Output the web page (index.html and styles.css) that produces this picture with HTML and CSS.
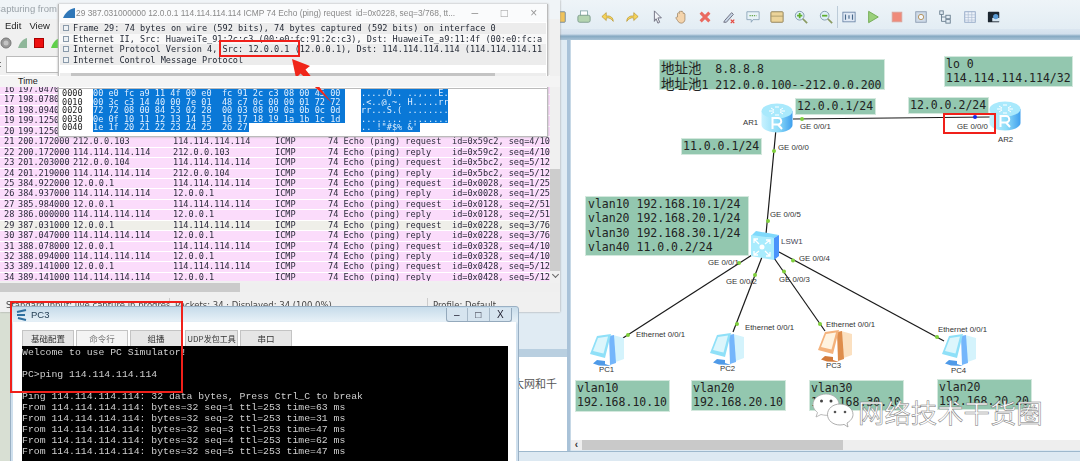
FILE: index.html
```html
<!DOCTYPE html>
<html lang="en">
<head>
<meta charset="utf-8">
<title>Wireshark and eNSP capture</title>
<link rel="stylesheet" href="styles.css">
</head>
<body>
<svg class="defs" width="0" height="0" aria-hidden="true">
  <defs>
    <linearGradient id="rb" x1="0" y1="0" x2="1" y2="0"><stop offset="0" stop-color="#c8f2ff"/><stop offset=".55" stop-color="#8ddcf8"/><stop offset="1" stop-color="#3f9fee"/></linearGradient>
    <symbol id="router" viewBox="0 0 32 30">
      <path d="M.5 8v14c0 4 7 7.500 15.500 7.500S31.500 26 31.500 22V8z" fill="url(#rb)"/>
      <ellipse cx="16" cy="8" rx="15.500" ry="7.500" fill="#a9e9fc"/>
      <path d="M8 8h5M19 8h5M14 4h4M14 12h4M10 5l3 2M22 5l-3 2M10 11l3-2M22 11l-3-2" stroke="#fff" stroke-width="1" fill="none"/>
      <path d="M11.500 26v-11h5.500a3 3 0 0 1 0 6.500h-5.500m5.500 0l4 4.500" stroke="#fff" stroke-width="2" fill="none"/>
    </symbol>
    <symbol id="switch" viewBox="0 0 30 30">
      <path d="M1 6 6 1l23 4-5 3z" fill="#7fd9fb"/>
      <path d="M1 5l23 3v22L1 26z" fill="#a9ecfd"/>
      <path d="M24 8l5-3v21l-5 4z" fill="#4a93fb"/>
      <circle cx="12" cy="17" r="2.500" fill="#fff"/>
      <path d="M4 9l5 5M4 13V9h4M20 10l-5 4M20 14v-4h-4M4 25l5-4M4 21v4h4M20 26l-5-5M20 22v4h-4" stroke="#fff" stroke-width="1.300" fill="none"/>
    </symbol>
    <symbol id="pcb" viewBox="0 0 36 36">
      <path d="M24 3l11 3v21l-11 4z" fill="#d4f3fc"/>
      <path d="M20 4l5-1 2 28-6 2z" fill="#74b6fb"/>
      <path d="M8 4 22 2 16 26 1 22z" fill="#8fe0f8"/>
      <path d="M9 6l10-1.500-4.500 17-10.500-2.500z" fill="#dcf6fc"/>
      <path d="M8 28l8 1v3l6 2-12-.5-6-2z" fill="#4f9ae8"/>
    </symbol>
    <symbol id="pco" viewBox="0 0 36 36">
      <path d="M24 3l11 3v21l-11 4z" fill="#fbe0c0"/>
      <path d="M20 4l5-1 2 28-6 2z" fill="#de8d4c"/>
      <path d="M8 4 22 2 16 26 1 22z" fill="#f4b27c"/>
      <path d="M9 6l10-1.500-4.500 17-10.500-2.500z" fill="#fff3e0"/>
      <path d="M8 28l8 1v3l6 2-12-.5-6-2z" fill="#d37a3a"/>
    </symbol>
  </defs>
</svg>

<div class="stage">
  <!-- simulator window behind -->
  <section class="sim">
    <div class="sim-bar">
      <svg class="tool" viewBox="0 0 16 16"><rect x="1" y="2" width="13" height="12" rx="1" fill="#f1c35a" stroke="#6d87a0"/></svg>
      <svg class="tool" viewBox="0 0 16 16"><rect x="4" y="1" width="8" height="6" fill="#fff" stroke="#8aa"/><rect x="1" y="6" width="14" height="8" rx="2" fill="#b4d4b0" stroke="#7a9a8a"/></svg>
      <svg class="tool" viewBox="0 0 16 16"><path d="M14 13c0-4-3-7-8-6V3L1 7.500 6 12V9c3-.5 6 1 8 4z" fill="#f5d35c" stroke="#b08a20" stroke-width=".7"/></svg>
      <svg class="tool" viewBox="0 0 16 16"><path d="M2 13c0-4 3-7 8-6V3l5 4.500L10 12V9C7 8.500 4 10 2 13z" fill="#f5d35c" stroke="#b08a20" stroke-width=".7"/></svg>
      <svg class="tool" viewBox="0 0 16 16"><path d="M5 1l8 8H9l2 5-2 1-2-5-2 3z" fill="#f2f4f8" stroke="#667"/></svg>
      <svg class="tool" viewBox="0 0 16 16"><path d="M4 8V4l1-1 1 1V2l1-1 1 1v-.5h1.500L10.500 3v1l1-.5 1 1V11c0 2-2 4-4 4S5 14 4 12L2 9l1-1z" fill="#f4d4ac" stroke="#8a7050" stroke-width=".7"/></svg>
      <svg class="tool" viewBox="0 0 16 16"><path d="M3 3l10 10M13 3L3 13" stroke="#ea6a60" stroke-width="3.500"/></svg>
      <svg class="tool" viewBox="0 0 16 16"><path d="M3 12l8-9 2 2-8 9H2z" fill="#c8d6e6" stroke="#667"/><path d="M10 11l4 4M14 11l-4 4" stroke="#e5473d" stroke-width="1.500"/></svg>
      <svg class="tool" viewBox="0 0 16 16"><path d="M1 2h14v9H8l-2 3v-3H1z" fill="#e8f2f8" stroke="#8aa4b8"/><path d="M4 6.500h8" stroke="#6aa84f" stroke-dasharray="1.500 1" stroke-width="1.500"/></svg>
      <svg class="tool" viewBox="0 0 16 16"><rect x="1" y="2" width="14" height="12" rx="1" fill="#ecd49a" stroke="#8a7a50"/><path d="M1 7h14" stroke="#a89868"/></svg>
      <svg class="tool" viewBox="0 0 16 16"><circle cx="6.500" cy="6.500" r="5" fill="#dff0f8" stroke="#7a94a8"/><path d="M10 10l5 5" stroke="#8a9a60" stroke-width="2"/><path d="M6.500 3.500v6M3.500 6.500h6" stroke="#5eae2e" stroke-width="2"/></svg>
      <svg class="tool" viewBox="0 0 16 16"><circle cx="6.500" cy="6.500" r="5" fill="#dff0f8" stroke="#7a94a8"/><path d="M10 10l5 5" stroke="#8a9a60" stroke-width="2"/><path d="M3.500 6.500h6" stroke="#5eae2e" stroke-width="2"/></svg>
      <i class="tool-sep"></i>
      <svg class="tool" viewBox="0 0 16 16"><rect x="1" y="2.500" width="14" height="11" fill="#dfe8f4" stroke="#6d87a8"/><path d="M4 5v6M8 6v4M12 5v6" stroke="#47688a" stroke-width="1.300"/></svg>
      <svg class="tool" viewBox="0 0 16 16"><path d="M3 1.500l11 6.500-11 6.500z" fill="#9ad07c" stroke="#6ea84e"/></svg>
      <svg class="tool" viewBox="0 0 16 16"><rect x="2.500" y="2.500" width="11" height="11" fill="#ef8a7a" stroke="#d9a39a"/></svg>
      <svg class="tool" viewBox="0 0 16 16"><rect x="2" y="2" width="12" height="12" fill="#cfdbe8" stroke="#8a9ab0"/><circle cx="8" cy="8" r="3" fill="#f4f8fc" stroke="#b08a50"/></svg>
      <svg class="tool" viewBox="0 0 16 16"><path d="M4 3v10h5M4 8h5" stroke="#667a8c" fill="none"/><rect x="2" y="1" width="4" height="4" fill="#e4eef6" stroke="#667a8c"/><rect x="9" y="6" width="5" height="4" fill="#e4eef6" stroke="#667a8c"/><rect x="9" y="11" width="5" height="4" fill="#e4eef6" stroke="#667a8c"/></svg>
      <svg class="tool" viewBox="0 0 16 16"><rect x="2" y="2" width="12" height="12" fill="#eef3fa" stroke="#8ea4c4"/><path d="M2 5.500h12M2 8.500h12M2 11.500h12M6 2v12M10 2v12" stroke="#a4b6d0" stroke-width=".7"/></svg>
      <svg class="tool" viewBox="0 0 16 16"><rect x="1" y="2" width="13" height="12" rx="1" fill="#1c2630"/><path d="M6 9h9v4H6z" fill="#d8e6f0"/><circle cx="10" cy="7.500" r="3" fill="#5b9bd5"/></svg>
    </div>
    <div class="sim-strip"></div>
    <div class="sim-main">
      <aside class="sim-side">
        <div class="side-top"></div>
        <div class="side-band"></div>
        <div class="side-panel"><p class="side-text">太网和千</p></div>
      </aside>
      <div class="sim-right">
        <div class="canvas">
          <svg class="links" viewBox="571 41 509 400" width="509" height="400">
            <g stroke="#1a1a1a" stroke-width="1.200" fill="none">
              <path d="M793 120 990 118"/><path d="M776 130 766 235"/><path d="M752 256 623 339"/>
              <path d="M762 258 733 333"/><path d="M774 259 825 332"/><path d="M779 253 944 342"/>
            </g>
            <g fill="#7fcf3c">
              <circle cx="802" cy="120" r="2"/><circle cx="774" cy="152" r="2"/><circle cx="768" cy="222" r="2"/>
              <circle cx="739" cy="264" r="2"/><circle cx="755" cy="276" r="2"/><circle cx="784" cy="272.500" r="2"/>
              <circle cx="793" cy="261.500" r="2"/><circle cx="628" cy="336" r="2"/><circle cx="737" cy="325" r="2"/>
              <circle cx="820" cy="325" r="2"/><circle cx="937" cy="338" r="2"/>
            </g>
            <circle cx="975" cy="118" r="2" fill="#1428e8"/>
          </svg>

          <div class="note n1"><span class="cjk">地址池</span>  8.8.8.8<br><span class="cjk">地址池</span>1 212.0.0.100--212.0.0.200</div>
          <div class="note n2">lo 0<br>114.114.114.114/32</div>
          <div class="note n3">12.0.0.1/24</div>
          <div class="note n4">12.0.0.2/24</div>
          <div class="note n5">11.0.0.1/24</div>
          <div class="note n6">vlan10 192.168.10.1/24<br>vlan20 192.168.20.1/24<br>vlan30 192.168.30.1/24<br>vlan40 11.0.0.2/24</div>
          <div class="note n7">vlan10<br>192.168.10.10</div>
          <div class="note n8">vlan20<br>192.168.20.10</div>
          <div class="note n9">vlan30<br>192.168.30.10</div>
          <div class="note n10">vlan20<br>192.168.20.20</div>

          <svg class="dev d-ar1"><use href="#router"/></svg>
          <svg class="dev d-ar2"><use href="#router"/></svg>
          <svg class="dev d-sw"><use href="#switch"/></svg>
          <svg class="dev d-pc1"><use href="#pcb"/></svg>
          <svg class="dev d-pc2"><use href="#pcb"/></svg>
          <svg class="dev d-pc3"><use href="#pco"/></svg>
          <svg class="dev d-pc4"><use href="#pcb"/></svg>

          <span class="tag t1">AR1</span><span class="tag t2">AR2</span><span class="tag t3">LSW1</span>
          <span class="tag t4">PC1</span><span class="tag t5">PC2</span><span class="tag t6">PC3</span><span class="tag t7">PC4</span>
          <span class="tag t8">GE 0/0/1</span><span class="tag t9">GE 0/0/0</span><span class="tag t10">GE 0/0/0</span>
          <span class="tag t11">GE 0/0/5</span><span class="tag t12">GE 0/0/1</span><span class="tag t13">GE 0/0/2</span>
          <span class="tag t14">GE 0/0/3</span><span class="tag t15">GE 0/0/4</span>
          <span class="tag t16">Ethernet 0/0/1</span><span class="tag t17">Ethernet 0/0/1</span>
          <span class="tag t18">Ethernet 0/0/1</span><span class="tag t19">Ethernet 0/0/1</span>

          <svg class="wechat" viewBox="0 0 42 36">
            <path d="M14 1C7 1 1 5.500 1 11.500c0 3.500 2 6 4.500 8L4 24l5-2.500c2 .5 3.500.8 5 .8 7 0 13-5 13-10.800S21 1 14 1z" fill="#fff" stroke="#aaa" stroke-width=".8"/>
            <path d="M28 11c-7 0-12.500 4.500-12.500 10.500S21 32 28 32c1.500 0 3-.3 4-.6l4 2.600-1-4c3.500-2 6-5 6-8.500C41 15.500 35 11 28 11z" fill="#fff" stroke="#999" stroke-width=".8"/>
            <circle cx="9.500" cy="8" r="1.500" fill="#444"/><circle cx="19" cy="8" r="1.500" fill="#444"/>
            <circle cx="23" cy="19" r="1.300" fill="#555"/><circle cx="33" cy="19" r="1.300" fill="#555"/>
          </svg>
          <span class="mark">网络技术干货圈</span>
        </div>
        <div class="sim-scroll"><b class="sim-left">‹</b><i class="sim-thumb"></i></div>
      </div>
    </div>
    <div class="sim-foot"></div>
  </section>

  <!-- wireshark main window -->
  <section class="ws">
    <div class="ws-title">Capturing from Standard input</div>
    <div class="ws-menu"><span>Edit</span><span>View</span><span>Go</span></div>
    <div class="ws-tools">
      <svg class="ws-ic" viewBox="0 0 12 12"><circle cx="6" cy="6" r="5" fill="#999" stroke="#777"/><circle cx="6" cy="6" r="2.500" fill="#c4c4c4"/></svg>
      <svg class="ws-ic" viewBox="0 0 12 12"><path d="M1 11C3 5 6 2 10 1v10z" fill="#8fb79a"/></svg>
      <svg class="ws-ic" viewBox="0 0 12 12"><rect x="1.500" y="1.500" width="9" height="9" fill="#e11" stroke="#a00"/></svg>
      <svg class="ws-ic" viewBox="0 0 12 12"><path d="M1 11C3 5 6 2 10 1v10z" fill="#5fd04a"/></svg>
    </div>
    <div class="ws-filter"><span>r:</span><i class="ws-input"></i></div>
    <div class="ws-body">
      <div class="ws-head"><span class="h-time">Time</span></div>
      <div class="ws-list">
        <div class="pkt"><span>16</span><span>197.047000</span></div>
        <div class="pkt"><span>17</span><span>198.078000</span></div>
        <div class="pkt"><span>18</span><span>198.094000</span></div>
        <div class="pkt"><span>19</span><span>199.125000</span></div>
        <div class="pkt"><span>20</span><span>199.125000</span></div>
        <div class="pkt"><span>21</span><span>200.172000</span><span>212.0.0.103</span><span>114.114.114.114</span><span>ICMP</span><span>74 Echo (ping) request</span><span>id=0x59c2, seq=4/10</span></div>
        <div class="pkt"><span>22</span><span>200.172000</span><span>114.114.114.114</span><span>212.0.0.103</span><span>ICMP</span><span>74 Echo (ping) reply</span><span>id=0x59c2, seq=4/10</span></div>
        <div class="pkt"><span>23</span><span>201.203000</span><span>212.0.0.104</span><span>114.114.114.114</span><span>ICMP</span><span>74 Echo (ping) request</span><span>id=0x5bc2, seq=5/12</span></div>
        <div class="pkt"><span>24</span><span>201.219000</span><span>114.114.114.114</span><span>212.0.0.104</span><span>ICMP</span><span>74 Echo (ping) reply</span><span>id=0x5bc2, seq=5/12</span></div>
        <div class="pkt"><span>25</span><span>384.922000</span><span>12.0.0.1</span><span>114.114.114.114</span><span>ICMP</span><span>74 Echo (ping) request</span><span>id=0x0028, seq=1/25</span></div>
        <div class="pkt"><span>26</span><span>384.937000</span><span>114.114.114.114</span><span>12.0.0.1</span><span>ICMP</span><span>74 Echo (ping) reply</span><span>id=0x0028, seq=1/25</span></div>
        <div class="pkt"><span>27</span><span>385.984000</span><span>12.0.0.1</span><span>114.114.114.114</span><span>ICMP</span><span>74 Echo (ping) request</span><span>id=0x0128, seq=2/51</span></div>
        <div class="pkt"><span>28</span><span>386.000000</span><span>114.114.114.114</span><span>12.0.0.1</span><span>ICMP</span><span>74 Echo (ping) reply</span><span>id=0x0128, seq=2/51</span></div>
        <div class="pkt sel"><span>29</span><span>387.031000</span><span>12.0.0.1</span><span>114.114.114.114</span><span>ICMP</span><span>74 Echo (ping) request</span><span>id=0x0228, seq=3/76</span></div>
        <div class="pkt"><span>30</span><span>387.047000</span><span>114.114.114.114</span><span>12.0.0.1</span><span>ICMP</span><span>74 Echo (ping) reply</span><span>id=0x0228, seq=3/76</span></div>
        <div class="pkt"><span>31</span><span>388.078000</span><span>12.0.0.1</span><span>114.114.114.114</span><span>ICMP</span><span>74 Echo (ping) request</span><span>id=0x0328, seq=4/10</span></div>
        <div class="pkt"><span>32</span><span>388.094000</span><span>114.114.114.114</span><span>12.0.0.1</span><span>ICMP</span><span>74 Echo (ping) reply</span><span>id=0x0328, seq=4/10</span></div>
        <div class="pkt"><span>33</span><span>389.141000</span><span>12.0.0.1</span><span>114.114.114.114</span><span>ICMP</span><span>74 Echo (ping) request</span><span>id=0x0428, seq=5/12</span></div>
        <div class="pkt"><span>34</span><span>389.141000</span><span>114.114.114.114</span><span>12.0.0.1</span><span>ICMP</span><span>74 Echo (ping) reply</span><span>id=0x0428, seq=5/12</span></div>
      </div>
      <div class="ws-vbar"><b class="v-up"></b><i class="ws-vthumb"></i><b class="v-down"></b></div>
    </div>
    <div class="ws-hbar"><i class="ws-hthumb"></i></div>
    <div class="ws-status"><span class="st1">Standard input: live capture in progress</span><span class="st2">Packets: 34 · Displayed: 34 (100.0%)</span><span class="st3">Profile: Default</span></div>
  </section>

  <!-- packet detail window -->
  <section class="detail">
    <header class="d-title">
      <svg class="fin" viewBox="0 0 14 12"><path d="M1 11C3 6 7 2 13 1v10z" fill="#2f77b8"/></svg>
      <span class="d-cap">29 387.031000000 12.0.0.1 114.114.114.114 ICMP 74 Echo (ping) request  id=0x0228, seq=3/768, tt...</span>
      <span class="d-btn">–</span><span class="d-btn">□</span><span class="d-btn">×</span>
    </header>
    <div class="tree">
      <div class="tr"><i class="plus"></i>Frame 29: 74 bytes on wire (592 bits), 74 bytes captured (592 bits) on interface 0</div>
      <div class="tr alt"><i class="plus"></i>Ethernet II, Src: HuaweiTe_91:2c:c3 (00:e0:fc:91:2c:c3), Dst: HuaweiTe_a9:11:4f (00:e0:fc:a</div>
      <div class="tr"><i class="plus"></i>Internet Protocol Version 4, Src: 12.0.0.1 (12.0.0.1), Dst: 114.114.114.114 (114.114.114.11</div>
      <div class="tr"><i class="plus"></i>Internet Control Message Protocol</div>
    </div>
    <div class="d-hbar"><b>‹</b><i class="d-thumb"></i><b>›</b></div>
    <div class="hex">
      <div class="hx"><span class="off">0000</span><span class="hb">00 e0 fc a9 11 4f 00 e0  fc 91 2c c3 08 00 45 00</span><span class="ha">.....O.. ..,...E.</span></div>
      <div class="hx"><span class="off">0010</span><span class="hb">00 3c c3 14 40 00 7e 01  48 c7 0c 00 00 01 72 72</span><span class="ha">.&lt;..@.~. H.....rr</span></div>
      <div class="hx"><span class="off">0020</span><span class="hb">72 72 08 00 84 53 02 28  00 03 08 09 0a 0b 0c 0d</span><span class="ha">rr...S.( ........</span></div>
      <div class="hx"><span class="off">0030</span><span class="hb">0e 0f 10 11 12 13 14 15  16 17 18 19 1a 1b 1c 1d</span><span class="ha">........ ........</span></div>
      <div class="hx"><span class="off">0040</span><span class="hb short">1e 1f 20 21 22 23 24 25  26 27</span><span class="ha short2">.. !"#$% &amp;'</span></div>
    </div>
  </section>

  <!-- PC3 console -->
  <section class="pc">
    <header class="pc-title">
      <svg class="pc-ic" viewBox="0 0 12 12"><path d="M1 3l9-2M1 6h8M2 9l8 2" stroke="#2f6f9f" stroke-width="2"/></svg>
      <span>PC3</span>
      <div class="pc-btns"><span>–</span><span>□</span><span>X</span></div>
    </header>
    <div class="pc-body">
      <nav class="tabs">
        <span class="tab">基础配置</span><span class="tab on">命令行</span><span class="tab">组播</span><span class="tab wide">UDP发包工具</span><span class="tab">串口</span>
      </nav>
      <pre class="term">Welcome to use PC Simulator!

PC&gt;ping 114.114.114.114

Ping 114.114.114.114: 32 data bytes, Press Ctrl_C to break
From 114.114.114.114: bytes=32 seq=1 ttl=253 time=63 ms
From 114.114.114.114: bytes=32 seq=2 ttl=253 time=31 ms
From 114.114.114.114: bytes=32 seq=3 ttl=253 time=47 ms
From 114.114.114.114: bytes=32 seq=4 ttl=253 time=62 ms
From 114.114.114.114: bytes=32 seq=5 ttl=253 time=47 ms</pre>
    </div>
  </section>

  <!-- red annotations -->
  <i class="mark-box b-src"></i>
  <i class="mark-box b-ge"></i>
  <i class="mark-box b-term"></i>
  <svg class="arrow" viewBox="0 0 1080 461" width="1080" height="461"><polygon points="292,59 310,66 305.500,69.500 332,103 300.500,73.500 296,78" fill="#f0261a"/></svg>
</div>
</body>
</html>
```

FILE: styles.css
```css
* { box-sizing: border-box; }
html, body { margin: 0; padding: 0; }
body { width: 1080px; height: 461px; overflow: hidden; background: #d8dfd3; font-family: "Liberation Sans", sans-serif; }
.defs { position: absolute; }
.stage { position: relative; width: 1080px; height: 461px; overflow: hidden; filter: blur(.45px); }

/* simulator */
.sim { position: absolute; left: 519px; top: 0; width: 561px; height: 461px; display: flex; flex-direction: column; background: #dde9f2; }
.sim-bar { height: 29px; padding: 5px 0 0 34px; display: flex; align-items: center; gap: 10.150px; background: linear-gradient(#eef4f8, #e3edf4); flex: none; }
.tool { width: 14px; height: 14px; flex: none; }
.tool-sep { width: 1px; height: 22px; background: #bccbd8; margin: 0 -6px; flex: none; }
.sim-strip { height: 11px; flex: none; background: linear-gradient(#dbe6f0 0, #d3e0ed 45%, #86a9c2 65%, #a9c3d6 100%); }
.sim-main { flex: 1; display: flex; min-height: 0; }
.sim-side { flex: none; display: flex; flex-direction: column; border-right: 3px solid #a9c2d8; width: 51px; }
.side-top { flex: 1; background: #e0ebf3; }
.side-band { height: 8px; background: #b9cfe0; }
.side-panel { height: 94px; background: #fff; overflow: hidden; }
.side-text { margin: 18px 0 0 -6px; font: 11px/16px "Noto Sans CJK SC", sans-serif; color: #555; white-space: nowrap; }
.sim-right { flex: 1; display: flex; flex-direction: column; border-left: 1px solid #c6d8e6; min-width: 0; }
.canvas { position: relative; height: 400px; background: #fff; overflow: hidden; flex: none; }
.sim-scroll { height: 10px; flex: none; background: #eee; display: flex; align-items: center; }
.sim-left { width: 11px; font: bold 10px/10px "Liberation Sans", sans-serif; text-align: center; color: #333; }
.sim-thumb { width: 261px; height: 10px; background: #c9c9c9; }
.sim-foot { height: 10px; flex: none; background: #dde9f2; border-top: 1px solid #9db8cd; }
.links { position: absolute; left: 0; top: 0; }

.note { position: absolute; background: #93c7af; border: 1px solid #d3e8dd; color: #222; font: 11.500px/14.300px "DejaVu Sans Mono", monospace; padding: 0 0 0 1px; white-space: pre; }
.cjk { font: 13.500px/14px "Noto Sans CJK SC", sans-serif; }
.n1 { left: 88px; top: 19px; width: 226px; height: 31px; }
.n2 { left: 373px; top: 16px; width: 129px; height: 31px; }
.n3 { left: 224px; top: 58px; width: 81px; height: 17px; }
.n4 { left: 337px; top: 57px; width: 81px; height: 17px; }
.n5 { left: 110px; top: 98px; width: 81px; height: 17px; }
.n6 { left: 14px; top: 156px; width: 164px; height: 60px; padding-left: 2px; }
.n7 { left: 4px; top: 340px; width: 95px; height: 32px; }
.n8 { left: 120px; top: 340px; width: 95px; height: 31px; }
.n9 { left: 238px; top: 340px; width: 95px; height: 31px; }
.n10 { left: 366px; top: 339px; width: 95px; height: 31px; }

.dev { position: absolute; }
.d-ar1 { left: 190px; top: 63px; width: 32px; height: 30px; }
.d-ar2 { left: 418px; top: 61px; width: 32px; height: 30px; }
.d-sw { left: 179px; top: 190px; width: 30px; height: 30px; }
.d-pc1 { left: 18px; top: 292px; width: 36px; height: 36px; }
.d-pc2 { left: 138px; top: 291px; width: 36px; height: 36px; }
.d-pc3 { left: 246px; top: 288px; width: 36px; height: 36px; }
.d-pc4 { left: 370px; top: 292px; width: 36px; height: 36px; }

.tag { position: absolute; font-size: 7.800px; line-height: 9px; color: #333; white-space: nowrap; }
.t1 { left: 172px; top: 78px; }
.t2 { left: 427px; top: 95px; }
.t3 { left: 210px; top: 197px; font-size: 8px; color: #445; }
.t4 { left: 28px; top: 325px; }
.t5 { left: 149px; top: 324px; }
.t6 { left: 255px; top: 321px; }
.t7 { left: 380px; top: 326px; }
.t8 { left: 229px; top: 82px; }
.t9 { left: 386px; top: 82px; }
.t10 { left: 207px; top: 103px; }
.t11 { left: 199px; top: 170px; }
.t12 { left: 137px; top: 218px; }
.t13 { left: 155px; top: 237px; }
.t14 { left: 208px; top: 235px; }
.t15 { left: 228px; top: 214px; }
.t16 { left: 65px; top: 290px; }
.t17 { left: 174px; top: 283px; }
.t18 { left: 255px; top: 280px; }
.t19 { left: 367px; top: 285px; }

.wechat { position: absolute; left: 241px; top: 353px; width: 42px; height: 36px; }
.mark { position: absolute; left: 287px; top: 354px; font: 26.400px/36px "Noto Sans CJK SC", sans-serif; color: #fff; -webkit-text-stroke: .5px #777; white-space: nowrap; }

/* wireshark main */
.ws { position: absolute; left: 0; top: 0; width: 560px; height: 312px; background: #f0f0f0; display: flex; flex-direction: column; box-shadow: 0 0 2px #999; }
.ws-title { height: 19px; margin-left: -6px; font: 9.500px/18px "Liberation Sans", sans-serif; color: #9aa2a8; white-space: nowrap; flex: none; background: #f0f4f7; }
.ws-menu { height: 14px; display: flex; gap: 8px; padding-left: 5px; font: 9.500px/14px "Liberation Sans", sans-serif; color: #222; flex: none; }
.ws-tools { height: 20px; display: flex; align-items: center; gap: 4.500px; flex: none; }
.ws-ic { width: 12px; height: 12px; flex: none; }
.ws-filter { height: 22px; display: flex; align-items: center; gap: 4px; font: 9px/12px "Liberation Sans", sans-serif; color: #333; flex: none; margin-left: -4px; }
.ws-input { width: 60px; height: 17px; background: #fff; border: 1px solid #bbb; }
.ws-body { position: relative; height: 206px; flex: none; background: #fff; overflow: hidden; }
.ws-head { height: 11px; margin-top: 1px; background: #f4f4f4; font: 9px/11px "Liberation Sans", sans-serif; color: #222; position: relative; z-index: 1; }
.h-time { margin-left: 18px; }
.ws-list { margin-top: -2px; width: 550px; overflow: hidden; }
.pkt { display: grid; grid-template-columns: 14px 55px 100px 102px 53px 124px 1fr; padding-left: 4px; height: 10.450px; background: #fbdcfb; border-bottom: 1px solid #fff; font: 8.570px/9.500px "DejaVu Sans Mono", monospace; color: #2a2a3a; white-space: pre; overflow: hidden; }
.pkt.sel { background: #efefe9; }
.pkt span { overflow: hidden; }
.ws-vbar { position: absolute; right: 0; top: 0; width: 10px; height: 206px; background: #f0f0f0; display: flex; flex-direction: column; align-items: center; }
.v-up, .v-down { width: 5px; height: 5px; flex: none; border-left: 1px solid #666; border-top: 1px solid #666; transform: rotate(45deg); margin-top: 5px; }
.v-down { transform: rotate(225deg); margin-top: 1px; }
.ws-vthumb { width: 10px; height: 102px; margin-top: 84px; background: #cdcdcd; flex: none; }
.ws-hbar { height: 9px; flex: none; background: #efefef; margin-top: 2px; }
.ws-hthumb { display: block; width: 240px; height: 9px; background: #cbcbcb; }
.ws-status { height: 14px; margin-top: 6px; flex: none; display: flex; font: 8.500px/15px "DejaVu Sans", sans-serif; color: #444; white-space: nowrap; }
.st1 { width: 170px; padding-left: 6px; border-right: 1px solid #ccc; overflow: hidden; }
.st2 { width: 258px; padding-left: 5px; border-right: 1px solid #ccc; }
.st3 { padding-left: 5px; }

/* packet detail */
.detail { position: absolute; left: 58px; top: 4px; width: 490px; height: 133px; background: #fff; border: 1px solid #bbb; border-top: 0; display: flex; flex-direction: column; box-shadow: 0 0 2px #aaa; }
.d-title { height: 18px; flex: none; display: flex; align-items: center; padding-left: 3px; background: #fafbfc; white-space: nowrap; }
.fin { width: 14px; height: 12px; flex: none; }
.d-cap { font: 8.400px/16px "Liberation Sans", sans-serif; width: 384px; overflow: hidden; white-space: pre; color: #8a8a8a; flex: none; }
.d-btn { width: 29.500px; text-align: center; font: 12px/14px "Liberation Sans", sans-serif; color: #999; flex: none; }
.tree { height: 47px; flex: none; padding: 1px 1px 0; background: #fff; }
.tr { height: 10.500px; display: flex; align-items: center; background: #ececec; font: 8.570px/10.500px "DejaVu Sans Mono", monospace; color: #1e2430; white-space: pre; overflow: hidden; padding-left: 3px; }
.tr.alt { background: #f8f8f8; }
.plus { width: 6px; height: 6px; border: 1px solid #8a9aaa; background: #eef2f5; margin-right: 4px; flex: none; }
.d-hbar { height: 9px; margin: 4px 1px 0; flex: none; background: #ededed; display: flex; align-items: center; font: bold 8px/9px "Liberation Sans", sans-serif; color: #555; }
.d-hbar b { width: 11px; flex: none; text-align: center; }
.d-thumb { width: 424px; height: 9px; background: #c4c4c4; flex: none; margin-right: 40px; }
.hex { margin-top: 6px; border-top: 1px solid #bbb; flex: 1; overflow: hidden; }
.hx { height: 8.500px; font: 8.570px/8.500px "DejaVu Sans Mono", monospace; color: #222; white-space: pre; display: flex; padding-left: 3px; }
.off { width: 31px; flex: none; }
.hb { width: 252px; flex: none; background: #0a78d7; color: #dfefff; }
.hb.short { width: 156px; margin-right: 96px; }
.ha { margin-left: 16px; width: 87px; background: #0a78d7; color: #dfefff; flex: none; }
.ha.short2 { width: 59px; }

/* PC3 */
.pc { position: absolute; left: 10px; top: 306px; width: 509px; height: 160px; background: linear-gradient(#c6dbea, #e6f0f7 14px, #cfe0ee 18px); border: 1px solid #9ab0c4; border-radius: 3px 3px 0 0; }
.pc-title { height: 15px; display: flex; align-items: center; padding-left: 5px; gap: 3px; font: 9.500px/14px "Liberation Sans", sans-serif; color: #1f3a50; }
.pc-ic { width: 12px; height: 12px; flex: none; }
.pc-btns { margin-left: auto; margin-right: 6px; display: flex; height: 14px; border: 1px solid #94a9bc; border-top: 0; border-radius: 0 0 3px 3px; background: #d6e4ef; }
.pc-btns span { width: 21.500px; text-align: center; font: 10px/13px "Liberation Sans", sans-serif; color: #223; border-right: 1px solid #a6b8c8; }
.pc-btns span:last-child { border-right: 0; }
.pc-body { margin: 0 2px; background: #fff; height: 140px; padding: 8px 8px 0 9px; }
.tabs { display: flex; gap: 2px; height: 16px; }
.tab { width: 52px; height: 16px; background: #e6e6e6; border: 1px solid #c4c4c4; border-bottom: 0; font: 8.500px/15px "Noto Sans CJK SC", sans-serif; text-align: center; color: #333; flex: none; }
.tab.on { background: #f4f4f4; color: #777; }
.tab.wide { margin-left: 1px; width: 53px; font-size: 8px; }
.term { margin: 0; width: 486px; height: 120px; background: #000; color: #cfcfcf; font: 9.800px/11.100px "Liberation Mono", monospace; padding: .5px 0 0 0; overflow: hidden; white-space: pre; }

/* annotations */
.mark-box { position: absolute; border: 2px solid #f0201a; }
.b-src { left: 219px; top: 40px; width: 81px; height: 17px; }
.b-ge { left: 943px; top: 113px; width: 53px; height: 21px; }
.b-term { left: 10px; top: 301px; width: 173px; height: 92px; }
.arrow { position: absolute; left: 0; top: 0; }
```
